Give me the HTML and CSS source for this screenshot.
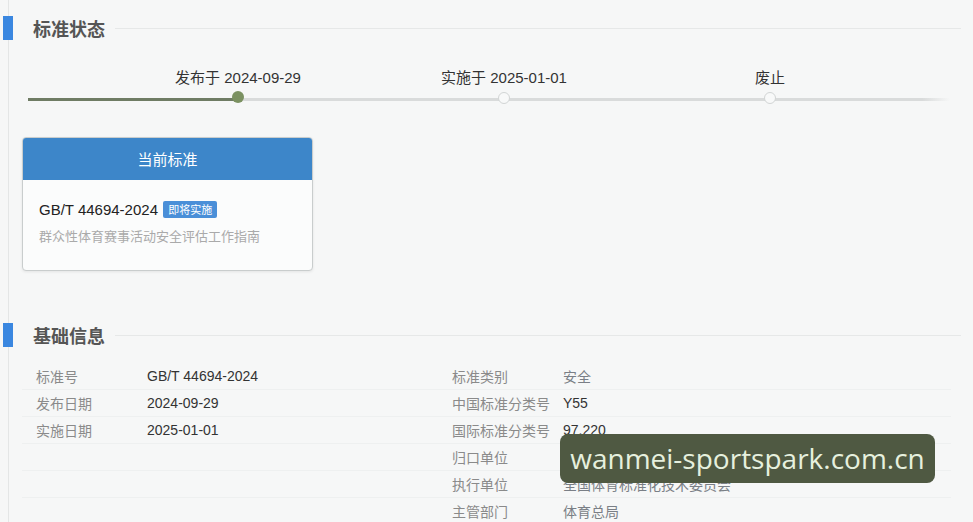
FILE: index.html
```html
<!doctype html>
<html lang="zh-CN">
  <head>
    <meta charset="UTF-8" />
    <meta name="viewport" content="width=device-width, initial-scale=1.0" />
    <title>标准详情</title>
    <link rel="stylesheet" href="styles.css">
  </head>
  <body>
    <div class="page">
      <div class="section-title">
        <span class="bar"></span>
        <h2>标准状态</h2>
        <span class="rule"></span>
      </div>

      <div class="timeline">
        <div class="step done">
          <span class="step-label">发布于 2024-09-29</span>
          <span class="dot"></span>
        </div>
        <div class="step">
          <span class="step-label">实施于 2025-01-01</span>
          <span class="dot"></span>
        </div>
        <div class="step">
          <span class="step-label">废止</span>
          <span class="dot"></span>
        </div>
      </div>

      <div class="card">
        <div class="card-head">当前标准</div>
        <div class="card-body">
          <div class="code">GB/T 44694-2024 <span class="badge">即将实施</span></div>
          <div class="name">群众性体育赛事活动安全评估工作指南</div>
        </div>
      </div>

      <div class="section-title second">
        <span class="bar"></span>
        <h2>基础信息</h2>
        <span class="rule"></span>
      </div>

      <div class="info">
        <div class="info-col">
          <div class="row"><span class="key">标准号</span><span class="val">GB/T 44694-2024</span></div>
          <div class="row"><span class="key">发布日期</span><span class="val">2024-09-29</span></div>
          <div class="row"><span class="key">实施日期</span><span class="val">2025-01-01</span></div>
          <div class="row"></div>
          <div class="row"></div>
          <div class="row"></div>
        </div>
        <div class="info-col">
          <div class="row"><span class="key">标准类别</span><span class="val soft">安全</span></div>
          <div class="row"><span class="key">中国标准分类号</span><span class="val">Y55</span></div>
          <div class="row"><span class="key">国际标准分类号</span><span class="val">97.220</span></div>
          <div class="row"><span class="key">归口单位</span><span class="val soft">全国体育标准化技术委员会</span></div>
          <div class="row"><span class="key">执行单位</span><span class="val soft">全国体育标准化技术委员会</span></div>
          <div class="row"><span class="key">主管部门</span><span class="val soft">体育总局</span></div>
        </div>
      </div>
    </div>

    <div class="stamp">wanmei-sportspark.com.cn</div>
  </body>
</html>
```

FILE: styles.css
```css
html {
  overflow: hidden;
}
body {
  font-family: "Liberation Sans", "Noto Sans CJK SC", sans-serif;
  background-color: #f6f7f7;
  color: #333;
  margin: 0;
  padding: 0;
}
.page {
  margin-left: 8px;
  border-left: 1px solid #e4e6e6;
  padding-top: 16px;
  min-height: 540px;
}

/* section headings */
.section-title {
  display: flex;
  align-items: center;
  margin-left: -6px;
  height: 24px;
}
.section-title.second {
  margin-top: 52px;
}
.bar {
  width: 10px;
  height: 24px;
  background-color: #3a87e0;
}
.section-title h2 {
  margin: 0 10px 0 20px;
  font-size: 18px;
  font-weight: bold;
  color: #555;
  font-family: "Noto Sans CJK SC", sans-serif;
  line-height: 24px;
}
.rule {
  flex: 1;
  height: 1px;
  margin-right: 12px;
  background-color: #e6e8e8;
}

/* status timeline */
.timeline {
  position: relative;
  display: flex;
  margin: 28px 23px 0 19px;
  padding-left: 77px;
}
.timeline::before {
  content: "";
  position: absolute;
  left: 0;
  right: 0;
  top: 30px;
  height: 3px;
  background: linear-gradient(to right, #6f7c64 0, #6f7c64 210px, #d9dbdb 210px, #d9dbdb 97%, #f6f7f7 100%);
}
.step {
  position: relative;
  width: 266px;
  display: flex;
  flex-direction: column;
  align-items: center;
}
.step-label {
  font-size: 15px;
  line-height: 20px;
  color: #333;
  font-family: "Liberation Sans", "Noto Sans CJK SC", sans-serif;
}
.dot {
  margin-top: 4px;
  width: 10px;
  height: 10px;
  border-radius: 50%;
  background-color: #f8f9f9;
  border: 1px solid #d2d5d5;
}
.step.done .dot {
  width: 12px;
  height: 12px;
  border: none;
  margin-top: 3px;
  background-color: #7b9161;
}

/* current standard card */
.card {
  width: 289px;
  margin: 33px 0 0 13px;
  border: 1px solid #c9cdcd;
  border-radius: 4px;
  overflow: hidden;
  background-color: #fbfcfc;
  box-shadow: 0 1px 3px rgba(0, 0, 0, 0.08);
}
.card-head {
  height: 42px;
  line-height: 42px;
  background-color: #3d86c9;
  color: #fff;
  text-align: center;
  font-size: 15px;
  font-family: "Noto Sans CJK SC", sans-serif;
}
.card-body {
  padding: 20px 16px 25px;
}
.code {
  font-size: 15px;
  color: #222;
  line-height: 20px;
}
.badge {
  display: inline-block;
  margin-left: 1px;
  padding: 0 5px;
  height: 17px;
  line-height: 17px;
  font-size: 11px;
  color: #fff;
  background-color: #4a8fd8;
  border-radius: 2px;
  vertical-align: 1px;
  font-family: "Noto Sans CJK SC", sans-serif;
}
.name {
  margin-top: 6px;
  font-size: 13px;
  color: #aaa;
  font-family: "Noto Sans CJK SC", sans-serif;
}

/* basic info table */
.info {
  display: grid;
  grid-template-columns: 416px 1fr;
  margin: 16px 22px 0 13px;
}
.row {
  display: flex;
  align-items: center;
  height: 26px;
  border-bottom: 1px solid #eef0f0;
  padding-left: 14px;
}
.key {
  width: 111px;
  font-size: 14px;
  color: #8a8a8a;
  font-family: "Noto Sans CJK SC", serif;
}
.val {
  font-size: 14px;
  color: #333;
}
.val.soft {
  color: #7a7f86;
  font-family: "Noto Sans CJK SC", sans-serif;
}

/* site stamp over the page */
.stamp {
  position: absolute;
  left: 560px;
  top: 434px;
  width: 375px;
  height: 49px;
  line-height: 49px;
  border-radius: 8px;
  background-color: #4f5942;
  color: #e6f0de;
  text-align: center;
  font-size: 28px;
  font-family: "Open Sans", sans-serif;
}
```
